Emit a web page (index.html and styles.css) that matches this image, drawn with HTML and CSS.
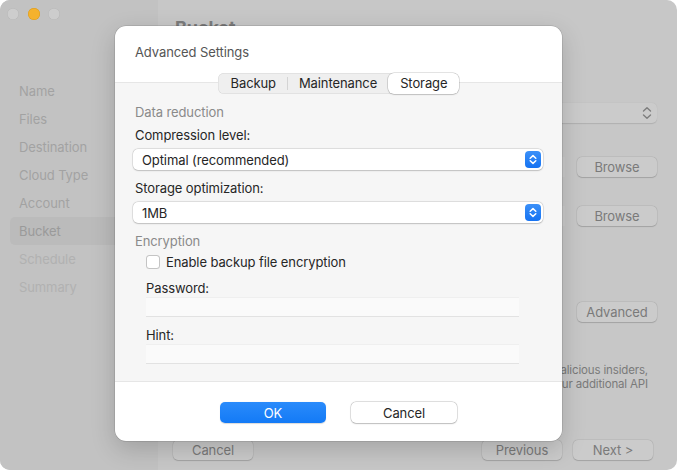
FILE: index.html
```html
<!DOCTYPE html>
<html lang="en">
<head>
<meta charset="utf-8">
<title>Bucket – Advanced Settings</title>
<link rel="stylesheet" href="styles.css">
</head>
<body>
<div class="window">
  <aside class="sidebar">
    <div class="traffic">
      <span class="light light-off"></span>
      <span class="light light-min"></span>
      <span class="light light-off"></span>
    </div>
    <nav class="steps">
      <div class="step">Name</div>
      <div class="step">Files</div>
      <div class="step">Destination</div>
      <div class="step">Cloud Type</div>
      <div class="step">Account</div>
      <div class="step step-current">Bucket</div>
      <div class="step step-future">Schedule</div>
      <div class="step step-future">Summary</div>
    </nav>
  </aside>

  <main class="main">
    <h1 class="page-title">Bucket</h1>
    <div class="bg-select">
      <span class="bg-select-value"></span>
      <svg class="bg-chevrons" width="10" height="14" viewBox="0 0 10 14"><path d="M1.5 5 L5 1.8 L8.5 5 M1.5 9 L5 12.2 L8.5 9" fill="none" stroke="#7d7d7d" stroke-width="1.4" stroke-linecap="round" stroke-linejoin="round"/></svg>
    </div>
    <div class="bg-row bg-row-1"><div class="bg-field"></div><button class="bg-btn">Browse</button></div>
    <div class="bg-row bg-row-2"><div class="bg-field"></div><button class="bg-btn">Browse</button></div>
    <div class="bg-row bg-row-3"><div class="bg-spacer"></div><button class="bg-btn">Advanced</button></div>
    <p class="bg-note">Object Lock protects backups from ransomware and malicious insiders,<br>but note that it can result in your additional API</p>
    <div class="bg-footer">
      <button class="bg-btn">Cancel</button>
      <div class="bg-footer-right">
        <button class="bg-btn">Previous</button>
        <button class="bg-btn">Next &gt;</button>
      </div>
    </div>
  </main>

  <section class="dialog">
    <header class="dialog-head">
      <div class="dialog-title">Advanced Settings</div>
      <div class="tabs">
        <span class="tab tab-backup">Backup</span>
        <span class="tab-sep"></span>
        <span class="tab tab-maint">Maintenance</span>
        <span class="tab tab-active">Storage</span>
      </div>
    </header>
    <div class="dialog-body">
      <div class="section-title">Data reduction</div>
      <div class="label">Compression level:</div>
      <div class="select">
        <span class="select-value">Optimal (recommended)</span>
        <span class="stepper"><svg width="16" height="17" viewBox="0 0 16 17"><path d="M5.2 7.2 L8 4.6 L10.8 7.2 M5.2 9.8 L8 12.4 L10.8 9.8" fill="none" stroke="#fff" stroke-width="1.5" stroke-linecap="round" stroke-linejoin="round"/></svg></span>
      </div>
      <div class="label label-after">Storage optimization:</div>
      <div class="select">
        <span class="select-value">1MB</span>
        <span class="stepper"><svg width="16" height="17" viewBox="0 0 16 17"><path d="M5.2 7.2 L8 4.6 L10.8 7.2 M5.2 9.8 L8 12.4 L10.8 9.8" fill="none" stroke="#fff" stroke-width="1.5" stroke-linecap="round" stroke-linejoin="round"/></svg></span>
      </div>
      <div class="section-title section-enc">Encryption</div>
      <div class="indent">
        <label class="check-row"><span class="checkbox"></span><span>Enable backup file encryption</span></label>
        <div class="label label-pw">Password:</div>
        <div class="field"></div>
        <div class="label label-hint">Hint:</div>
        <div class="field"></div>
      </div>
    </div>
    <footer class="dialog-foot">
      <button class="btn btn-primary">OK</button>
      <button class="btn">Cancel</button>
    </footer>
  </section>
</div>
</body>
</html>
```
FILE: styles.css
```css
* { box-sizing: border-box; }
html, body { margin: 0; padding: 0; background: #ffffff; }
body { font-family: Inter, "Liberation Sans", sans-serif; font-size: 13px; letter-spacing: -0.1px; color: #262626; }

.window {
  position: relative;
  width: 677px;
  height: 470px;
  display: flex;
  border-radius: 10px;
  overflow: hidden;
  background: #c7c7c7;
}

/* ---------- sidebar ---------- */
.sidebar {
  width: 158px;
  flex: none;
  background: #c2c2c2;
  display: flex;
  flex-direction: column;
}
.traffic {
  display: flex;
  gap: 8.5px;
  padding: 8px 0 0 7px;
}
.light {
  width: 12px;
  height: 12px;
  border-radius: 50%;
}
.light-off { background: #cdcdcd; box-shadow: inset 0 0 0 0.5px #b4b4b4; }
.light-min { background: #f5b22d; box-shadow: inset 0 0 0 0.5px #d99a1c; }
.steps {
  margin-top: 57px;
  display: flex;
  flex-direction: column;
}
.step {
  height: 28px;
  line-height: 28px;
  margin: 0 10px;
  padding-left: 9px;
  color: #a2a2a2;
  border-radius: 5px;
}
.step-current { background: #bbbbbb; color: #9a9a9a; }
.step-future { color: #b1b1b1; }

/* ---------- main (dimmed background page) ---------- */
.main {
  flex: 1;
  display: flex;
  flex-direction: column;
  padding: 17px 20px 10px 15px;
  color: #7a7a7a;
}
.page-title {
  margin: 0 0 0 2px;
  font-size: 18px;
  line-height: 22px;
  font-weight: 700;
  color: #7c7c7c;
}
.bg-select {
  margin-top: 64px;
  height: 20px;
  margin-left: 2px;
  border-radius: 5px;
  background: #cbcbcb;
  box-shadow: 0 0.5px 1px rgba(0,0,0,0.12);
  display: flex;
  align-items: center;
  justify-content: flex-end;
  padding-right: 5px;
}
.bg-select-value { flex: 1; }
.bg-row { display: flex; align-items: center; gap: 12px; height: 20px; }
.bg-row-1 { margin-top: 34px; }
.bg-row-2 { margin-top: 29px; }
.bg-row-3 { margin-top: 76px; }
.bg-field { flex: 1; height: 20px; background: #cbcbcb; }
.bg-spacer { flex: 1; }
.bg-btn {
  width: 80px;
  height: 20px;
  padding: 0;
  border: none;
  border-radius: 5px;
  background: #cbcbcb;
  box-shadow: 0 0 0 0.5px rgba(0,0,0,0.08), 0 0.5px 1px rgba(0,0,0,0.15);
  font-family: inherit;
  font-size: 13px;
  letter-spacing: -0.1px;
  color: #7a7a7a;
}
.bg-note {
  align-self: flex-end;
  margin: 41px 9px 0 0;
  font-size: 11.5px;
  letter-spacing: -0.15px;
  line-height: 14px;
  text-align: right;
  white-space: nowrap;
  color: #7a7a7a;
}
.bg-footer {
  margin-top: auto;
  display: flex;
  justify-content: space-between;
  padding-right: 4px;
}
.bg-footer-right { display: flex; gap: 11px; }

/* ---------- dialog ---------- */
.dialog {
  position: absolute;
  left: 115px;
  top: 26px;
  width: 447px;
  height: 415px;
  background: #ffffff;
  border-radius: 11px;
  box-shadow: 0 0 0 0.5px rgba(0,0,0,0.18), 0 8px 24px rgba(0,0,0,0.18);
  display: flex;
  flex-direction: column;
  overflow: hidden;
}
.dialog-head {
  padding: 17px 20px 0;
  display: flex;
  flex-direction: column;
}
.dialog-title {
  line-height: 18px;
  color: #555555;
}
.tabs {
  position: relative;
  z-index: 1;
  align-self: center;
  margin-top: 12px;
  margin-bottom: -12px;
  height: 21px;
  display: flex;
  align-items: center;
  background: #efefef;
  border-radius: 6px;
  box-shadow: inset 0 0 0 0.5px #d6d6d6;
}
.tab {
  height: 21px;
  line-height: 21px;
  color: #262626;
}
.tab-backup { padding: 0 11px 0 13px; }
.tab-sep { width: 1px; height: 13px; background: #d4d4d4; }
.tab-maint { padding: 0 11px 0 11px; }
.tab-active {
  padding: 0 12px;
  background: #ffffff;
  border-radius: 6px;
  box-shadow: 0 0 0 0.5px rgba(0,0,0,0.22), 0 1px 1.5px rgba(0,0,0,0.12);
}

.dialog-body {
  height: 300px;
  background: #f6f6f6;
  border-top: 1px solid #e6e6e6;
  border-bottom: 1px solid #e6e6e6;
  padding: 21px 19px 0 18px;
  display: flex;
  flex-direction: column;
}
.section-title {
  padding-left: 2px;
  line-height: 16px;
  color: #8a8a8a;
}
.label {
  padding-left: 2px;
  line-height: 16px;
  margin-top: 7px;
}
.label-after { margin-top: 10px; }
.select {
  margin-top: 6px;
  height: 21px;
  background: #ffffff;
  border-radius: 5px;
  box-shadow: 0 0 0 0.5px rgba(0,0,0,0.14), 0 0.5px 1.5px rgba(0,0,0,0.16);
  display: flex;
  align-items: center;
  padding: 0 2px 0 9px;
}
.select-value { flex: 1; }
.stepper {
  width: 16px;
  height: 17px;
  border-radius: 4px;
  background: linear-gradient(#3b90f8, #1673f2);
  display: flex;
}
.section-enc { margin-top: 10px; }
.indent {
  padding-left: 13px;
  padding-right: 24px;
  display: flex;
  flex-direction: column;
}
.check-row {
  margin-top: 5px;
  height: 16px;
  display: flex;
  align-items: center;
  gap: 6px;
}
.checkbox {
  width: 14px;
  height: 14px;
  border-radius: 3.5px;
  background: #ffffff;
  box-shadow: inset 0 0 0 1px #c4c4c4;
}
.label-pw { padding-left: 0; margin-top: 10px; }
.label-hint { padding-left: 0; margin-top: 10px; }
.field {
  flex: none;
  margin-top: 1px;
  height: 20px;
  background: #fafafa;
  border-top: 1px solid #efefef;
  border-bottom: 1px solid #e2e2e2;
}

.dialog-foot {
  flex: 1;
  display: flex;
  justify-content: center;
  gap: 25px;
  padding-top: 20px;
}
.btn {
  width: 106px;
  height: 21px;
  padding: 0;
  border: none;
  border-radius: 5px;
  background: #ffffff;
  box-shadow: 0 0 0 0.5px rgba(0,0,0,0.2), 0 0.5px 1.5px rgba(0,0,0,0.18);
  font-family: inherit;
  font-size: 13px;
  letter-spacing: -0.1px;
  color: #262626;
}
.btn-primary {
  background: linear-gradient(#2a8bfb, #137af6);
  color: #ffffff;
  box-shadow: 0 0.5px 1px rgba(0,0,0,0.15);
}
```
